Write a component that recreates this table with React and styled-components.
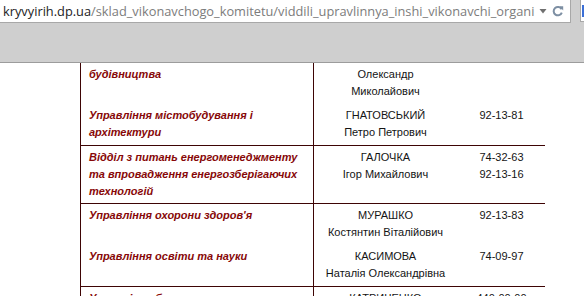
import React from 'react'
import styled, { createGlobalStyle } from 'styled-components'

const GlobalStyle = createGlobalStyle`
    html, body {
        margin: 0;
        padding: 0;
        background: #ffffff;
        overflow: hidden;
    }
    body {
        font-family: "Liberation Sans", Arial, sans-serif;
    }
`

const Page = styled.div`
    width: 584px;
    height: 296px;
    display: flex;
    flex-direction: column;
    overflow: hidden;
`

const Chrome = styled.div`
    height: 63px;
    box-sizing: border-box;
    background: #cfcfcf;
    border-bottom: 1px solid #9c9c9c;
    flex-shrink: 0;
`

const Bar = styled.div`
    display: flex;
    height: 23px;
`

const Omnibox = styled.div`
    width: 571px;
    box-sizing: border-box;
    background: #ffffff;
    border-right: 1px solid #a8a8a8;
    border-bottom: 1px solid #a8a8a8;
    display: flex;
    align-items: center;
    padding-left: 3px;
    padding-right: 6px;
`

const Url = styled.div`
    flex: 1;
    font-family: "Open Sans", "Noto Sans", sans-serif;
    font-size: 12.8px;
    color: #7c7c7c;
    white-space: nowrap;
    overflow: hidden;
`

const Host = styled.span`
    color: #222222;
`

const IconBox = styled.div`
    display: flex;
    align-items: center;
    gap: 5px;
`

const ExtBox = styled.div`
    margin-left: 9px;
    width: 4px;
    height: 22px;
    box-sizing: border-box;
    background: #ffffff;
    border-left: 1px solid #a8a8a8;
    border-bottom: 1px solid #a8a8a8;
    display: flex;
    align-items: center;
`

const ExtMark = styled.div`
    width: 2px;
    height: 12px;
    margin-left: 1px;
    background: #3b6fd6;
`

const Viewport = styled.div`
    flex: 1;
    overflow: hidden;
    padding-left: 80px;
`

/* the page is scrolled: the first row starts above the visible area */
const Table = styled.div`
    width: 465px;
    margin-top: -17px;
`

const Row = styled.div`
    display: grid;
    grid-template-columns: 233px 143px 89px;
    row-gap: 7px;
    box-sizing: border-box;
    padding: ${props => props.$tight ? '3px 0 3px' : '3px 0 4px'};
    border-left: 1px solid #3e0404;
    border-bottom: 1px solid #3e0404;
    background: linear-gradient(#3e0404, #3e0404) 232px 0 / 1px 100% no-repeat;
`

const Dept = styled.div`
    padding: 0 8px;
    font-size: 11px;
    line-height: 17px;
    font-weight: bold;
    font-style: italic;
    color: #870808;
`

const Person = styled.div`
    font-size: 11px;
    line-height: 17px;
    color: #141414;
    text-align: center;
`

const Phones = styled.div`
    font-size: 11px;
    line-height: 17px;
    color: #141414;
    text-align: center;
`

const Line = styled.div`
    white-space: nowrap;
`

const rows = [
    [
        {
            dept: ['Управління капітального', 'будівництва'],
            name: ['БОНДАРЕНКО', 'Олександр', 'Миколайович'],
            phones: ['74-21-60'],
        },
        {
            dept: ['Управління містобудування і', 'архітектури'],
            name: ['ГНАТОВСЬКИЙ', 'Петро Петрович'],
            phones: ['92-13-81'],
        },
    ],
    [
        {
            dept: ['Відділ з питань енергоменеджменту', 'та впровадження енергозберігаючих', 'технологій'],
            name: ['ГАЛОЧКА', 'Ігор Михайлович'],
            phones: ['74-32-63', '92-13-16'],
        },
    ],
    [
        {
            dept: ["Управління охорони здоров'я"],
            name: ['МУРАШКО', 'Костянтин Віталійович'],
            phones: ['92-13-83'],
        },
        {
            dept: ['Управління освіти та науки'],
            name: ['КАСИМОВА', 'Наталія Олександрівна'],
            phones: ['74-09-97'],
        },
    ],
    [
        {
            dept: ['Управління благоустрою та', 'житлової політики'],
            name: ['КАТРИЧЕНКО', 'Олег Вікторович'],
            phones: ['440-00-00'],
        },
    ],
]

const DropArrow = () => (
    <svg width="8" height="6" viewBox="0 0 8 6">
        <path d="M0.5 1 L7.5 1 L4 5.5 Z" fill="#6f6f6f" />
    </svg>
)

const Reload = () => (
    <svg width="12" height="12" viewBox="0 0 12 12">
        <path d="M9.6 4.2 A4.2 4.2 0 1 0 9.8 7.6" fill="none" stroke="#7d8fa3" strokeWidth="2" />
        <path d="M7.2 1.2 L11.2 1.2 L11.2 5.4 Z" fill="#7d8fa3" />
    </svg>
)

const App = () => {
  return (
    <Page>
      <GlobalStyle />
      <Chrome>
        <Bar>
          <Omnibox>
            <Url>
              <Host>kryvyirih.dp.ua</Host>/sklad_vikonavchogo_komitetu/viddili_upravlinnya_inshi_vikonavchi_organi
            </Url>
            <IconBox>
              <DropArrow />
              <Reload />
            </IconBox>
          </Omnibox>
          <ExtBox>
            <ExtMark />
          </ExtBox>
        </Bar>
      </Chrome>
      <Viewport>
        <Table>
          {rows.map((entries, i) => (
            <Row key={i} $tight={entries.length === 1 && entries[0].dept.length > 2}>
              {entries.map((e, j) => (
                <React.Fragment key={j}>
                  <Dept>{e.dept.map(t => <Line key={t}>{t}</Line>)}</Dept>
                  <Person>{e.name.map(t => <Line key={t}>{t}</Line>)}</Person>
                  <Phones>{e.phones.map(t => <Line key={t}>{t}</Line>)}</Phones>
                </React.Fragment>
              ))}
            </Row>
          ))}
        </Table>
      </Viewport>
    </Page>
  )
}

export default App
